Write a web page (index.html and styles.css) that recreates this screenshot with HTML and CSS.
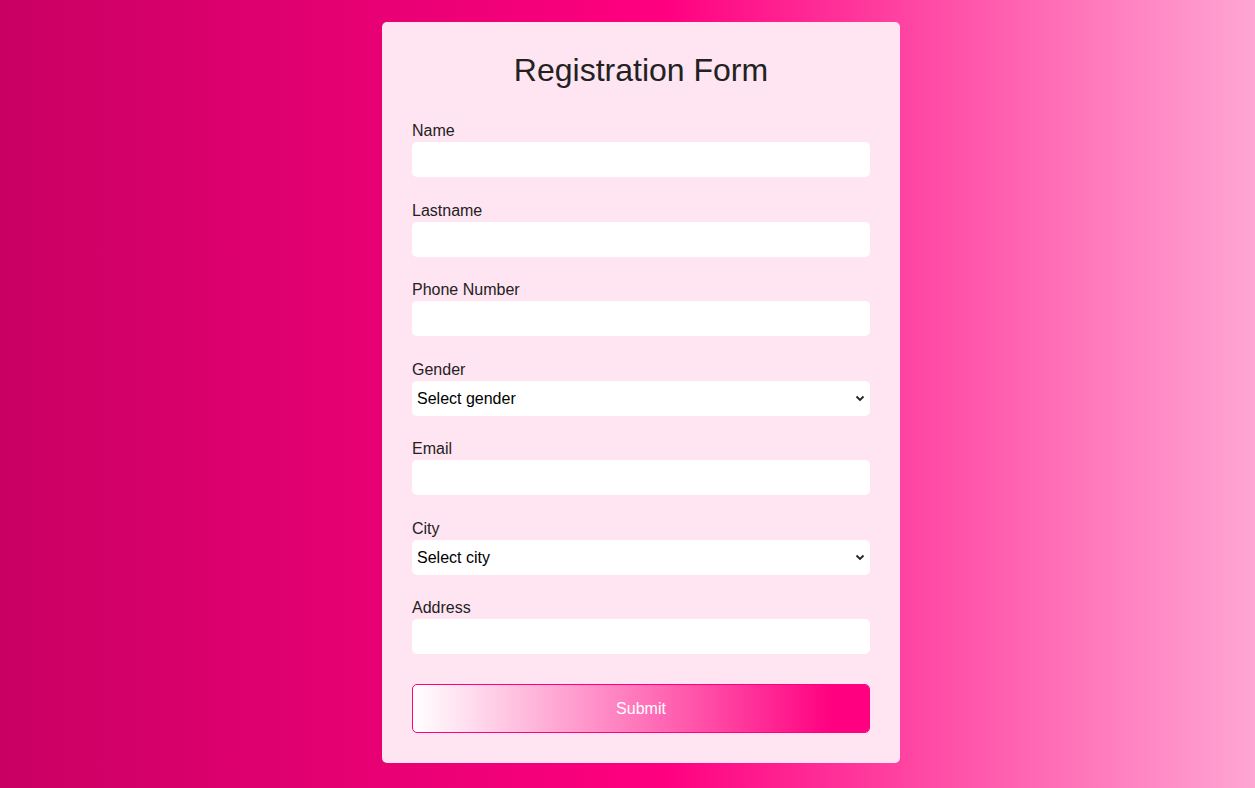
FILE: index.html
```html
<!DOCTYPE html>
<html lang="en">
<head>
<meta charset="utf-8">
<title>Registration Form</title>
<link rel="stylesheet" href="styles.css">
</head>
<body>
<div class="card">
  <h2 class="title">Registration Form</h2>
  <form class="form">
    <div class="group">
      <label class="label" for="name">Name</label>
      <input class="field" id="name" type="text">
    </div>
    <div class="group">
      <label class="label" for="lastname">Lastname</label>
      <input class="field" id="lastname" type="text">
    </div>
    <div class="group">
      <label class="label" for="phone">Phone Number</label>
      <input class="field" id="phone" type="text">
    </div>
    <div class="group">
      <label class="label" for="gender">Gender</label>
      <select class="field select" id="gender">
        <option>Select gender</option>
        <option>Male</option>
        <option>Female</option>
      </select>
    </div>
    <div class="group">
      <label class="label" for="email">Email</label>
      <input class="field" id="email" type="email">
    </div>
    <div class="group">
      <label class="label" for="city">City</label>
      <select class="field select" id="city">
        <option>Select city</option>
      </select>
    </div>
    <div class="group">
      <label class="label" for="address">Address</label>
      <input class="field" id="address" type="text">
    </div>
    <button class="submit" type="button">Submit</button>
  </form>
</div>
</body>
</html>
```
FILE: styles.css
```css
html, body {
  margin: 0;
  padding: 0;
  height: 100%;
}
body {
  font-family: "Liberation Sans", Arial, sans-serif;
  background: linear-gradient(to right, #c90063 0%, #ff0080 53%, #ffa6d3 100%);
  display: flex;
  justify-content: center;
  align-items: flex-start;
  min-height: 788px;
  padding-left: 27px;
  box-sizing: border-box;
}
.card {
  margin-top: 22px;
  width: 518px;
  box-sizing: border-box;
  background: #ffe4f1;
  border-radius: 5px;
  padding: 30px;
}
.title {
  margin: 0 0 32px 0;
  font-size: 32px;
  font-weight: normal;
  line-height: 37px;
  text-align: center;
  color: #222;
}
.form {
  display: flex;
  flex-direction: column;
}
.group {
  display: flex;
  flex-direction: column;
  margin-bottom: 23.5px;
}
.label {
  font-size: 16px;
  line-height: 19px;
  color: #222;
  margin-bottom: 2px;
}
.field {
  height: 35px;
  box-sizing: border-box;
  border: none;
  border-radius: 5px;
  background-color: #fff;
  font-family: "Liberation Sans", Arial, sans-serif;
  font-size: 16px;
  padding: 0 8px;
  outline: none;
}
.select {
  -webkit-appearance: none;
  appearance: none;
  padding: 0 24px 0 5px;
  color: #000;
  background-image: url("data:image/svg+xml;utf8,<svg xmlns='http://www.w3.org/2000/svg' width='10' height='7' viewBox='0 0 10 7'><path d='M1.5 1.5 L5 5 L8.5 1.5' fill='none' stroke='%23222' stroke-width='1.8'/></svg>");
  background-repeat: no-repeat;
  background-position: right 5px center;
  background-size: 10px 7px;
}
.submit {
  margin-top: 6.5px;
  height: 49px;
  border: 1px solid #ff0080;
  border-radius: 5px;
  background: linear-gradient(to right, #ffffff 0%, #ff0080 92%);
  background-clip: padding-box;
  background-color: #ffe4f1;
  color: #fff;
  font-family: "Liberation Sans", Arial, sans-serif;
  font-size: 16px;
  cursor: pointer;
}
```
